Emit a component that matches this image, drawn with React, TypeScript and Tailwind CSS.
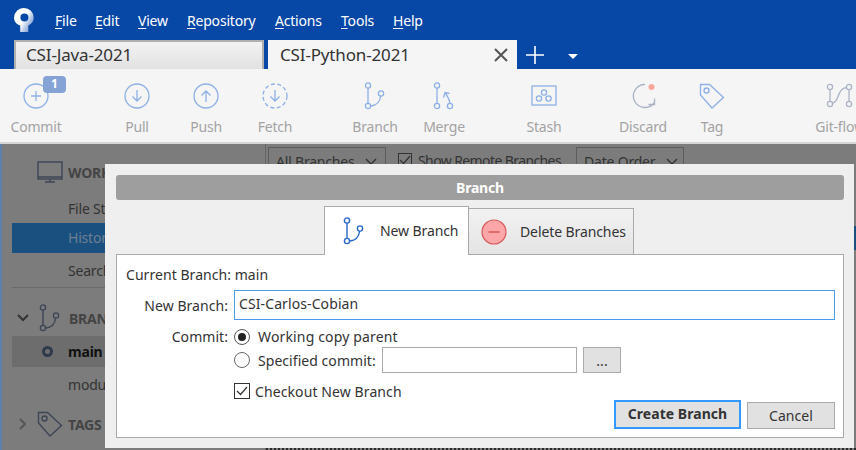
const font = { fontFamily: '"Noto Sans", "Open Sans", sans-serif' };

function Ico({ children, w = 32, h = 32 }: { children: React.ReactNode; w?: number; h?: number }) {
  return (
    <svg width={w} height={h} viewBox={`0 0 ${w} ${h}`} fill="none" stroke="#8db0e6" strokeWidth="1.3">
      {children}
    </svg>
  );
}

function Branch({ color = "#8db0e6", sw = 1.3 }: { color?: string; sw?: number }) {
  return (
    <svg width="24" height="28" viewBox="0 0 24 28" fill="none" stroke={color} strokeWidth={sw}>
      <circle cx="5" cy="3.5" r="2.6" />
      <circle cx="5" cy="24" r="2.6" />
      <circle cx="18" cy="11.5" r="2.6" />
      <path d="M5 6.1V21.4M7.6 24C13 23.5 17 20 17.6 14" />
    </svg>
  );
}

function Tool({ label, ml, children }: { label: string; ml: number; children: React.ReactNode }) {
  return (
    <div className="flex flex-col items-center w-[70px] shrink-0" style={{ marginLeft: ml }}>
      <div className="h-[32px] flex items-center justify-center relative">{children}</div>
      <div className="mt-[5px] text-[14px] leading-[20px] text-[#a3a3a3] tracking-[-0.2px] whitespace-nowrap">{label}</div>
    </div>
  );
}

function Menu({ first, rest }: { first: string; rest: string }) {
  return (
    <span className="text-white text-[14px] leading-[20px] tracking-[-0.2px]">
      <span className="underline underline-offset-2">{first}</span>
      {rest}
    </span>
  );
}

function Chevron() {
  return (
    <svg width="12" height="8" viewBox="0 0 12 8" fill="none" stroke="#333" strokeWidth="1.4">
      <path d="M1 1L6 6L11 1" />
    </svg>
  );
}

const menus: [string, string, number][] = [
  ["F", "ile", 55],
  ["E", "dit", 95],
  ["V", "iew", 138],
  ["R", "epository", 187],
  ["A", "ctions", 275],
  ["T", "ools", 341],
  ["H", "elp", 393],
];

export default function App() {
  return (
    <div className="relative w-[856px] h-[450px] overflow-hidden bg-[#0747a6] flex flex-col" style={font}>
      {/* menu bar */}
      <div className="h-[40px] shrink-0 flex items-center pl-[14px]">
        <svg width="20" height="24" viewBox="0 0 20 24" className="shrink-0">
          <defs>
            <linearGradient id="lg" x1="0" y1="0" x2="1" y2="0.7">
              <stop offset="0.55" stopColor="#fff" />
              <stop offset="1" stopColor="#6f93cf" />
            </linearGradient>
          </defs>
          <path
            fillRule="evenodd"
            fill="url(#lg)"
            d="M10 0a9.7 9.7 0 0 1 9.7 9.7c0 3.4-1.9 6.2-5.4 7.7V24H6.2V17.6C2.4 16.2 0 13.2 0 9.7A9.7 9.7 0 0 1 10 0Zm.4 5.6a4 4 0 1 0 0 8 4 4 0 0 0 0-8Z"
          />
        </svg>
        <div className="flex">
          {menus.map(([a, b, x], i) => (
            <span key={a} style={{ marginLeft: i === 0 ? 21 : 0, width: i < menus.length - 1 ? menus[i + 1][2] - x : undefined }}>
              <Menu first={a} rest={b} />
            </span>
          ))}
        </div>
      </div>
      {/* tabs */}
      <div className="h-[29px] shrink-0 flex pl-[14px]">
        <div className="w-[250px] border-[2px] border-b-0 border-[#b0b0b0] bg-gradient-to-b from-[#f2f2f2] to-[#e2e2e2] pl-[10px] text-[17px] leading-[26px] text-[#333] tracking-[-0.15px]">
          CSI-Java-2021
        </div>
        <div className="ml-[4px] w-[249px] bg-[#f5f5f5] pl-[12px] pr-[9px] text-[17px] leading-[28px] text-[#333] tracking-[-0.15px] flex items-center justify-between">
          CSI-Python-2021
          <svg width="14" height="14" viewBox="0 0 14 14" stroke="#555" strokeWidth="2">
            <path d="M1 1L13 13M13 1L1 13" />
          </svg>
        </div>
        <svg width="20" height="20" viewBox="0 0 20 20" stroke="#fff" strokeWidth="1.6" className="ml-[8px] mt-[5px]">
          <path d="M10 1V19M1 10H19" />
        </svg>
        <svg width="10" height="5" viewBox="0 0 10 5" fill="#fff" className="ml-[23px] mt-[14px]">
          <path d="M0 0H10L5 5Z" />
        </svg>
      </div>
      {/* toolbar */}
      <div className="h-[75px] shrink-0 bg-[#f5f5f5] border-b-[2px] border-[#d6d6d6] flex pt-[11px] overflow-hidden">
        <Tool label="Commit" ml={1}>
          <Ico>
            <circle cx="16" cy="16" r="12" />
            <path d="M16 11V21M11 16H21" />
          </Ico>
          <span className="absolute left-[23px] -top-[4px] w-[23px] h-[17px] rounded-[4px] bg-[#85a3d4] text-white text-[12px] leading-[16px] font-bold text-center">1</span>
        </Tool>
        <Tool label="Pull" ml={31}>
          <Ico>
            <circle cx="16" cy="16" r="12" />
            <path d="M16 10V21M11.5 16.5L16 21L20.5 16.5" />
          </Ico>
        </Tool>
        <Tool label="Push" ml={-1}>
          <Ico>
            <circle cx="16" cy="16" r="12" />
            <path d="M16 22V11M11.5 15.5L16 11L20.5 15.5" />
          </Ico>
        </Tool>
        <Tool label="Fetch" ml={-1}>
          <Ico>
            <circle cx="16" cy="16" r="12" strokeDasharray="4 2.5" />
            <path d="M16 10V21M11.5 16.5L16 21L20.5 16.5" />
          </Ico>
        </Tool>
        <Tool label="Branch" ml={30}>
          <Branch />
        </Tool>
        <Tool label="Merge" ml={-1}>
          <Ico w={24} h={28}>
            <circle cx="5" cy="3.5" r="2.6" />
            <circle cx="5" cy="24" r="2.6" />
            <circle cx="18" cy="24" r="2.6" />
            <path d="M5 6.1V21.4M18 21.4C17.8 17.5 15.5 15 13.5 11M11.5 15.5L13 10.5L17.5 11.5" />
          </Ico>
        </Tool>
        <Tool label="Stash" ml={30}>
          <Ico w={26} h={22}>
            <rect x="1" y="1" width="24" height="19" />
            <circle cx="13" cy="7.5" r="2.6" />
            <circle cx="8" cy="13.5" r="2.6" />
            <circle cx="17.5" cy="13.5" r="2.6" />
          </Ico>
        </Tool>
        <Tool label="Discard" ml={29}>
          <svg width="28" height="28" viewBox="0 0 28 28" fill="none" stroke="#aab4c6" strokeWidth="1.4">
            <path d="M16 2.5A11.5 11.5 0 1 0 25 21M19.5 22.5H25.5V16.5" />
            <circle cx="22.5" cy="5" r="3" fill="#fba79c" stroke="none" />
          </svg>
        </Tool>
        <Tool label="Tag" ml={-1}>
          <Ico w={26} h={26}>
            <path d="M1.5 1.5H10.5L24.5 14.5L13 25L1.5 12Z" />
            <circle cx="7.5" cy="7.5" r="2.5" />
          </Ico>
        </Tool>
        <Tool label="Git-flow" ml={58}>
          <svg width="28" height="26" viewBox="0 0 28 26" fill="none" stroke="#aab4c6" strokeWidth="1.3">
            <circle cx="4" cy="4" r="2.6" />
            <circle cx="4" cy="21" r="2.6" />
            <circle cx="23" cy="4" r="2.6" />
            <circle cx="23" cy="21" r="2.6" />
            <path d="M4 6.6V18.4M23 6.6V18.4M6.5 20C13 20 11 5 20.5 4.5" />
          </svg>
        </Tool>
      </div>
      {/* dimmed content */}
      <div className="flex-1 min-h-0 bg-[#7c7c7c] flex border-l-[2px] border-[#5f7fae] text-[14px] text-[#333] tracking-[-0.2px]">
        <div className="w-[264px] shrink-0 pl-[10px] flex flex-col border-r border-[#666]">
          <div className="h-[54px] shrink-0 flex items-center pl-[25px] gap-[5px] pt-[2px]">
            <svg width="26" height="22" viewBox="0 0 26 22" fill="none" stroke="#3e4656" strokeWidth="1.4">
              <rect x="1" y="1" width="24" height="17" />
              <path d="M1 16H25M13 18V21M8 21H18" />
            </svg>
            <span className="font-bold text-[#444]">WORKSPACE</span>
          </div>
          <div className="h-[25px] shrink-0 pl-[56px] leading-[22px]">File Status</div>
          <div className="h-[30px] shrink-0 pl-[56px] leading-[30px] bg-[#1a5080] text-[#6d7f90]">History</div>
          <div className="h-[35px] shrink-0 pl-[56px] leading-[35px] border-b border-[#6a6a6a]">Search</div>
          <div className="h-[48px] shrink-0 flex items-center pl-[5px] gap-[9px] pt-[12px]">
            <svg width="12" height="8" viewBox="0 0 12 8" fill="none" stroke="#333" strokeWidth="2">
              <path d="M1 1L6 6L11 1" />
            </svg>
            <Branch color="#3e4656" sw={1.4} />
            <span className="font-bold text-[#444] -ml-[2px]">BRANCHES</span>
          </div>
          <div className="h-[31px] shrink-0 flex items-center bg-[#6d6d6d] pl-[30px] gap-[15px]">
            <div className="w-[11px] h-[11px] rounded-full border-[3px] border-[#2e3a4c]" />
            <span className="font-bold text-[#111]">main</span>
          </div>
          <div className="h-[36px] shrink-0 pl-[56px] leading-[36px]">module</div>
          <div className="h-[42px] shrink-0 flex items-center pl-[7px] gap-[10px]">
            <svg width="8" height="12" viewBox="0 0 8 12" fill="none" stroke="#555" strokeWidth="2">
              <path d="M1 1L6 6L1 11" />
            </svg>
            <svg width="26" height="26" viewBox="0 0 26 26" fill="none" stroke="#3e4656" strokeWidth="1.4">
              <path d="M1.5 1.5H10.5L24.5 14.5L13 25L1.5 12Z" />
              <circle cx="7.5" cy="7.5" r="2.5" />
            </svg>
            <span className="font-bold text-[#444] -ml-[5px]">TAGS</span>
          </div>
        </div>
        <div className="flex-1 min-w-0 flex flex-col">
          <div className="pl-[2px] pt-[3px] flex items-start">
            <div className="w-[118px] h-[29px] border border-[#5c5c5c] pl-[7px] pr-[8px] leading-[27px] shrink-0 flex items-center justify-between">
              All Branches
              <Chevron />
            </div>
            <div className="ml-[12px] w-[14px] h-[14px] border border-[#333] mt-[6px] shrink-0 flex items-center justify-center">
              <svg width="12" height="10" viewBox="0 0 12 10" fill="none" stroke="#333" strokeWidth="1.2">
                <path d="M1 5L4.5 8.5L11 1" />
              </svg>
            </div>
            <div className="ml-[6px] leading-[27px] whitespace-nowrap w-[158px] shrink-0 tracking-[-0.6px]">Show Remote Branches</div>
            <div className="w-[108px] h-[29px] border border-[#5c5c5c] pl-[7px] pr-[5px] leading-[27px] shrink-0 flex items-center justify-between">
              Date Order
              <Chevron />
            </div>
          </div>
          {/* commit list: only slivers show beside and below the dialog */}
          <div className="mt-[50px] h-[24px] shrink-0 bg-[#1a5080]" />
          <div className="flex-1" />
          <div className="h-[2px] shrink-0 border-t-2 border-dotted border-[#2a2a2a]" />
        </div>
      </div>
      {/* dialog */}
      <div className="absolute left-[105px] top-[164px] w-[749px] h-[284px] bg-[#efefef] pl-[11px] pr-[10px] pt-[11px] text-[14px] text-[#333] tracking-[0.05px] flex flex-col">
        <div className="h-[25px] shrink-0 rounded-[3px] bg-[#9e9e9e] text-white font-bold text-[14px] leading-[25px] text-center tracking-[-0.2px]">Branch</div>
        <div className="h-[55px] shrink-0 flex pl-[208px] items-end -mb-[1px] relative z-10">
          <div className="w-[145px] h-[49px] bg-white border border-b-0 border-[#aaa] flex items-center pl-[17px] gap-[14px]">
            <Branch color="#2a69c9" sw={1.4} />
            <span className="-mt-[2px] tracking-[-0.1px]">New Branch</span>
          </div>
          <div className="w-[165px] h-[47px] border border-l-0 border-[#aaa] bg-gradient-to-b from-[#f2f2f2] to-[#e4e4e4] flex items-center pl-[12px] gap-[13px]">
            <svg width="26" height="26" viewBox="0 0 26 26">
              <circle cx="13" cy="13" r="12" fill="#fba6a8" stroke="#d9595b" strokeWidth="1.2" />
              <path d="M7.5 13H18.5" stroke="#d9595b" strokeWidth="1.6" />
            </svg>
            <span className="tracking-[-0.1px]">Delete Branches</span>
          </div>
        </div>
        <div className="h-[184px] shrink-0 bg-white border border-[#aaa] pl-[9px] pr-[8px] pt-[10px] flex flex-col">
          <div className="h-[20px] shrink-0 leading-[20px] tracking-[0.05px]">Current Branch: main</div>
          <div className="flex items-center mt-[5px] h-[30px] shrink-0">
            <span className="w-[102px] text-right shrink-0">New Branch:</span>
            <div className="ml-[6px] flex-1 h-[30px] border border-[#4b9be8] pl-[4px] leading-[26px] tracking-[0.1px]">CSI-Carlos-Cobian</div>
          </div>
          <div className="flex items-center mt-[6px] h-[21px] shrink-0">
            <span className="w-[102px] text-right shrink-0">Commit:</span>
            <span className="ml-[6px] w-[16px] h-[16px] rounded-full border border-[#555] flex items-center justify-center shrink-0">
              <span className="w-[8px] h-[8px] rounded-full bg-[#222]" />
            </span>
            <span className="ml-[8px] tracking-[0.15px]">Working copy parent</span>
          </div>
          <div className="flex items-center h-[26px] shrink-0">
            <span className="ml-[108px] w-[16px] h-[16px] rounded-full border border-[#666] shrink-0" />
            <span className="ml-[8px] w-[124px] shrink-0 whitespace-nowrap">Specified commit:</span>
            <div className="w-[195px] h-[26px] border border-[#aaa] shrink-0" />
            <div className="ml-[6px] w-[38px] h-[26px] border border-[#aaa] bg-[#e1e1e1] text-center leading-[26px] shrink-0">...</div>
          </div>
          <div className="flex items-center mt-[8px] h-[20px] shrink-0">
            <span className="ml-[108px] w-[16px] h-[16px] border border-[#333] flex items-center justify-center shrink-0">
              <svg width="12" height="10" viewBox="0 0 12 10" fill="none" stroke="#333" strokeWidth="1.2">
                <path d="M1 5L4.5 8.5L11 1" />
              </svg>
            </span>
            <span className="ml-[5px] tracking-[0.1px]">Checkout New Branch</span>
          </div>
          <div className="flex justify-end gap-[6px] -mt-[1px] shrink-0">
            <div className="w-[127px] h-[29px] border-[2px] border-[#3399ff] bg-[#e1e1e1] text-center font-bold leading-[24px]">Create Branch</div>
            <div className="w-[88px] h-[27px] mt-[2px] border border-[#aaa] bg-[#e1e1e1] text-center leading-[25px]">Cancel</div>
          </div>
        </div>
      </div>
    </div>
  );
}
